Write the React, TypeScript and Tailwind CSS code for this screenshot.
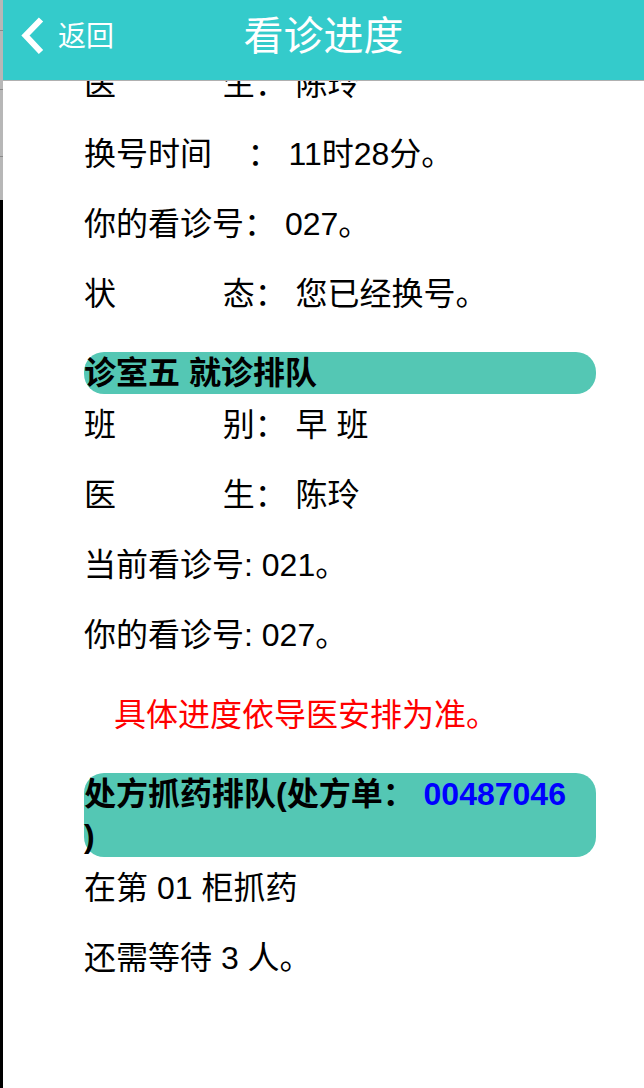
export default function App() {
  return (
    <div className="flex h-[1088px] w-[644px] overflow-hidden bg-white font-['Liberation_Sans','Noto_Sans_CJK_SC',sans-serif] text-black">
      {/* left edge strip */}
      <div className="flex w-[3px] shrink-0 flex-col">
        <div className="flex h-[200px] flex-col bg-[#b7b7b7]">
          <div className="h-[30px]" />
          <div className="h-px bg-[#8a8a8a]" />
          <div className="h-[58px]" />
          <div className="h-px bg-[#8a8a8a]" />
          <div className="h-[66px]" />
          <div className="h-px bg-[#8a8a8a]" />
        </div>
        <div className="flex-1 bg-black" />
      </div>

      <div className="flex min-w-0 flex-1 flex-col">
        {/* header */}
        <header className="grid h-[81px] shrink-0 grid-cols-[1fr_auto_1fr] items-center border-b border-[#b0b0b0] bg-[#34cbcb] pb-[6px] text-white">
          <div className="flex items-center pl-[15px]">
            <svg width="30" height="46" viewBox="0 0 30 46" className="-mt-[2px]">
              <polyline
                points="23,6.5 7.5,22.5 23,39"
                fill="none"
                stroke="#ffffff"
                strokeWidth="6"
                strokeLinecap="butt"
                strokeLinejoin="miter"
              />
            </svg>
            <span className="ml-[10px] text-[28px] leading-none">返回</span>
          </div>
          <h1 className="-mt-[3px] text-[40px] font-normal leading-none">看诊进度</h1>
          <div />
        </header>

        {/* content */}
        <main className="flex-1 overflow-hidden pl-[81px] pr-[48px] text-[32px] leading-[36px]">
          <div className="-mt-[15px] flex flex-col gap-[34px] whitespace-pre">
            <p>{"医            生： 陈玲"}</p>
            <p>{"换号时间    ： 11时28分。"}</p>
            <p>{"你的看诊号： 027。"}</p>
            <p>{"状            态： 您已经换号。"}</p>
          </div>

          <div className="mt-[40px] rounded-[20px] bg-[#54c7b4] text-[32px] font-bold leading-[42px]">
            诊室五 就诊排队
          </div>
          <div className="flex flex-col gap-[34px] whitespace-pre pt-[13px]">
            <p>{"班            别： 早 班"}</p>
            <p>{"医            生： 陈玲"}</p>
            <p>{"当前看诊号: 021。"}</p>
            <p>{"你的看诊号: 027。"}</p>
          </div>

          <p className="mt-[44px] pl-[30px] text-[#ff0000]">具体进度依导医安排为准。</p>

          <div className="mt-[40px] rounded-[20px] bg-[#54c7b4] text-[32px] font-bold leading-[42px]">
            处方抓药排队(处方单：{" "}
            <span className="text-[#0000ff]">00487046</span>
            <br />)
          </div>
          <div className="flex flex-col gap-[34px] whitespace-pre pt-[13px]">
            <p>{"在第 01 柜抓药"}</p>
            <p>{"还需等待 3 人。"}</p>
          </div>
        </main>
      </div>
    </div>
  );
}
